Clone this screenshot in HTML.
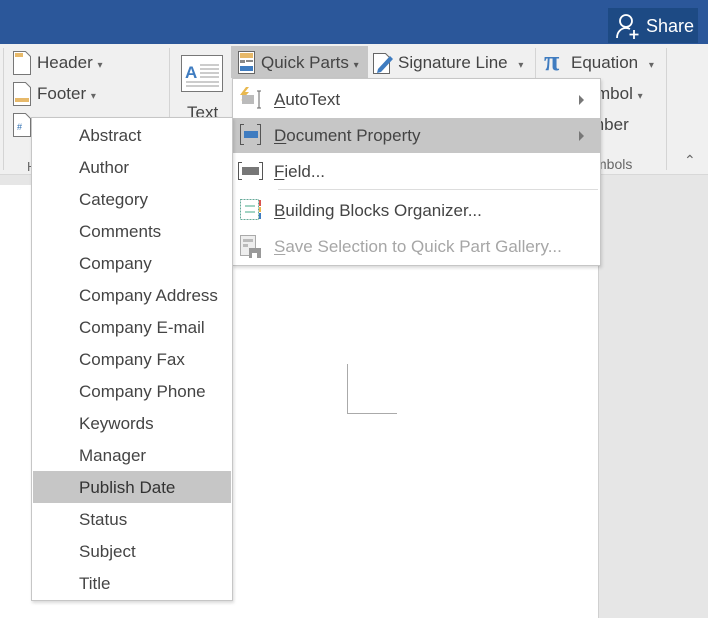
<!DOCTYPE html>
<html><head><style>
*{margin:0;padding:0;box-sizing:border-box}
body{width:708px;height:618px;overflow:hidden;position:relative;background:#fff;font-family:"Liberation Sans",sans-serif;color:#444;font-size:17px}
.a{position:absolute}
.t{position:absolute;white-space:nowrap;line-height:20px}
u{text-decoration:underline;text-underline-offset:2px}
</style></head><body>
<div class="a" style="left:0;top:0;width:708px;height:44px;background:#2b579a"></div>
<div class="a" style="left:608px;top:8px;width:90px;height:35px;background:#1d4a84"></div>
<svg class="a" style="left:615px;top:12px" width="26" height="28" viewBox="0 0 26 28"><circle cx="11" cy="9" r="6" fill="none" stroke="#fff" stroke-width="1.8"/><path d="M2 26c0-6 4-10 9-10 2 0 3 .5 4 1" fill="none" stroke="#fff" stroke-width="1.8"/><path d="M19 18v9M14.5 22.5h9" stroke="#fff" stroke-width="1.8"/></svg>
<div class="t" style="left:646px;top:16px;color:#fff;font-size:18px">Share</div>
<div class="a" style="left:0;top:44px;width:708px;height:131px;background:#f0f0f0;border-bottom:1px solid #d8d8d8"></div>
<div class="a" style="left:0;top:175px;width:708px;height:10px;background:#e6e6e6"></div>
<div class="a" style="left:598px;top:175px;width:110px;height:443px;background:#e6e6e6;border-left:1px solid #d0d0d0"></div>
<div class="a" style="left:3px;top:48px;width:1px;height:122px;background:#d4d4d4"></div>
<div class="a" style="left:169px;top:48px;width:1px;height:122px;background:#d4d4d4"></div>
<div class="a" style="left:535px;top:48px;width:1px;height:122px;background:#d4d4d4"></div>
<div class="a" style="left:666px;top:48px;width:1px;height:122px;background:#d4d4d4"></div>
<svg class="a" style="left:13px;top:51px" width="18" height="24"><path d="M.5.5h12l5 5v18H.5z" fill="#fff" stroke="#777"/><rect x="2" y="2" width="8" height="4" fill="#e7b96a"/></svg>
<div class="t" style="left:37px;top:53px">Header <span style="font-size:10px;color:#666">▾</span></div>
<svg class="a" style="left:13px;top:82px" width="18" height="24"><path d="M.5.5h12l5 5v18H.5z" fill="#fff" stroke="#777"/><rect x="2" y="16" width="14" height="4" fill="#e7b96a"/></svg>
<div class="t" style="left:37px;top:84px">Footer <span style="font-size:10px;color:#666">▾</span></div>
<svg class="a" style="left:13px;top:113px" width="18" height="24"><path d="M.5.5h12l5 5v18H.5z" fill="#fff" stroke="#777"/><text x="4" y="17" font-size="9" fill="#2b6cb0">#</text></svg>
<div class="t" style="left:27px;top:157px;font-size:13px;color:#666">H</div>
<svg class="a" style="left:181px;top:55px" width="43" height="38"><rect x=".5" y=".5" width="41" height="36" fill="#fff" stroke="#777"/><text x="4" y="23" font-size="17" font-weight="bold" fill="#3f7cc0">A</text><path d="M19 10h19M19 14h19M19 18h19M19 22h19M5 27h33M5 31h33" stroke="#999"/></svg>
<div class="t" style="left:187px;top:103px">Text</div>
<div class="a" style="left:231px;top:46px;width:137px;height:32px;background:#c6c6c6"></div>
<svg class="a" style="left:238px;top:51px" width="17" height="23"><rect x=".5" y=".5" width="16" height="22" fill="#fff" stroke="#666"/><rect x="2" y="2" width="13" height="5" fill="#e7b96a"/><rect x="2" y="9" width="5" height="3" fill="#888"/><rect x="8" y="9" width="7" height="2" fill="#888"/><rect x="2" y="15" width="13" height="5" fill="#3f7cc0"/></svg>
<div class="t" style="left:261px;top:53px">Quick Parts <span style="font-size:10px;color:#555">▾</span></div>
<svg class="a" style="left:373px;top:51px" width="22" height="24"><path d="M.5 2.5h12l4 4v16H.5z" fill="#fff" stroke="#666"/><path d="M5 18l12-13 3 3-12 13-4 1z" fill="#3f7cc0"/></svg>
<div class="t" style="left:398px;top:53px">Signature Line <span style="font-size:10px;color:#666;margin-left:6px">▾</span></div>
<div class="t" style="left:544px;top:47px;font-size:28px;line-height:30px;color:#3f7cc0;font-family:'Liberation Serif',serif;font-weight:bold">π</div>
<div class="t" style="left:571px;top:53px">Equation <span style="font-size:10px;color:#666;margin-left:6px">▾</span></div>
<div class="t" style="left:596px;top:84px">mbol <span style="font-size:10px;color:#666">▾</span></div>
<div class="t" style="left:590px;top:115px">mber</div>
<div class="t" style="left:595px;top:154px;font-size:14px;color:#666">mbols</div>
<div class="t" style="left:684px;top:150px;font-size:14px;color:#666">⌃</div>
<div class="a" style="left:347px;top:364px;width:1px;height:50px;background:#aaa"></div>
<div class="a" style="left:347px;top:413px;width:50px;height:1px;background:#aaa"></div>
<div class="a" style="left:232px;top:78px;width:369px;height:188px;background:#fff;border:1px solid #c6c6c6;box-shadow:1px 2px 3px rgba(0,0,0,.15)"></div>
<svg class="a" style="left:238px;top:86px" width="26" height="26"><path d="M8 1l-6 8h4l-3 6 8-9H7l4-5z" fill="#e8b84f"/><rect x="4" y="9" width="12" height="9" fill="#bbb"/><path d="M19 5h4M21 5v17M19 22h4" stroke="#666"/></svg>
<div class="t" style="left:274px;top:90px"><u>A</u>utoText</div>
<svg class="a" style="left:579px;top:95px" width="6" height="10"><path d="M0 0l5 5-5 5z" fill="#777"/></svg>
<div class="a" style="left:233px;top:118px;width:367px;height:35px;background:#c6c6c6"></div>
<svg class="a" style="left:240px;top:124px" width="22" height="22"><path d="M4 .5H.5v20H4M17 .5h3.5v20H17" fill="none" stroke="#555"/><rect x="4" y="7" width="14" height="7" fill="#3f7cc0"/></svg>
<div class="t" style="left:274px;top:126px"><u>D</u>ocument Property</div>
<svg class="a" style="left:579px;top:131px" width="6" height="10"><path d="M0 0l5 5-5 5z" fill="#777"/></svg>
<svg class="a" style="left:238px;top:162px" width="26" height="20"><path d="M4 .5H.5v17H4M21 .5h3.5v17H21" fill="none" stroke="#555"/><rect x="4" y="5" width="17" height="8" fill="#777"/></svg>
<div class="t" style="left:274px;top:162px"><u>F</u>ield...</div>
<div class="a" style="left:278px;top:189px;width:320px;height:1px;background:#ddd"></div>
<svg class="a" style="left:240px;top:199px" width="24" height="24"><rect x=".5" y=".5" width="18" height="20" fill="#fff" stroke="#6a9" stroke-dasharray="2 1"/><path d="M5 7h10M5 13h10" stroke="#4a8"/><rect x="19" y="1" width="2" height="6" fill="#d9534f"/><rect x="19" y="8" width="2" height="5" fill="#e8b84f"/><rect x="19" y="14" width="2" height="6" fill="#3f7cc0"/></svg>
<div class="t" style="left:274px;top:201px"><u>B</u>uilding Blocks Organizer...</div>
<svg class="a" style="left:240px;top:235px" width="24" height="24"><rect x=".5" y=".5" width="15" height="20" fill="#eee" stroke="#aaa"/><rect x="3" y="4" width="10" height="3" fill="#bbb"/><rect x="3" y="9" width="5" height="3" fill="#bbb"/><rect x="9" y="13" width="12" height="10" fill="#999"/><rect x="12" y="18" width="5" height="5" fill="#fff"/></svg>
<div class="t" style="left:274px;top:237px;color:#a6a6a6"><u>S</u>ave Selection to Quick Part Gallery...</div>
<div class="a" style="left:31px;top:117px;width:202px;height:484px;background:#fff;border:1px solid #c6c6c6;box-shadow:1px 2px 3px rgba(0,0,0,.15)"></div>
<div class="a" style="left:33px;top:471px;width:198px;height:32px;background:#c6c6c6"></div>
<div class="t" style="left:79px;top:126px">Abstract</div>
<div class="t" style="left:79px;top:158px">Author</div>
<div class="t" style="left:79px;top:190px">Category</div>
<div class="t" style="left:79px;top:222px">Comments</div>
<div class="t" style="left:79px;top:254px">Company</div>
<div class="t" style="left:79px;top:286px">Company Address</div>
<div class="t" style="left:79px;top:318px">Company E-mail</div>
<div class="t" style="left:79px;top:350px">Company Fax</div>
<div class="t" style="left:79px;top:382px">Company Phone</div>
<div class="t" style="left:79px;top:414px">Keywords</div>
<div class="t" style="left:79px;top:446px">Manager</div>
<div class="t" style="left:79px;top:478px;color:#333">Publish Date</div>
<div class="t" style="left:79px;top:510px">Status</div>
<div class="t" style="left:79px;top:542px">Subject</div>
<div class="t" style="left:79px;top:574px">Title</div>
</body></html>
